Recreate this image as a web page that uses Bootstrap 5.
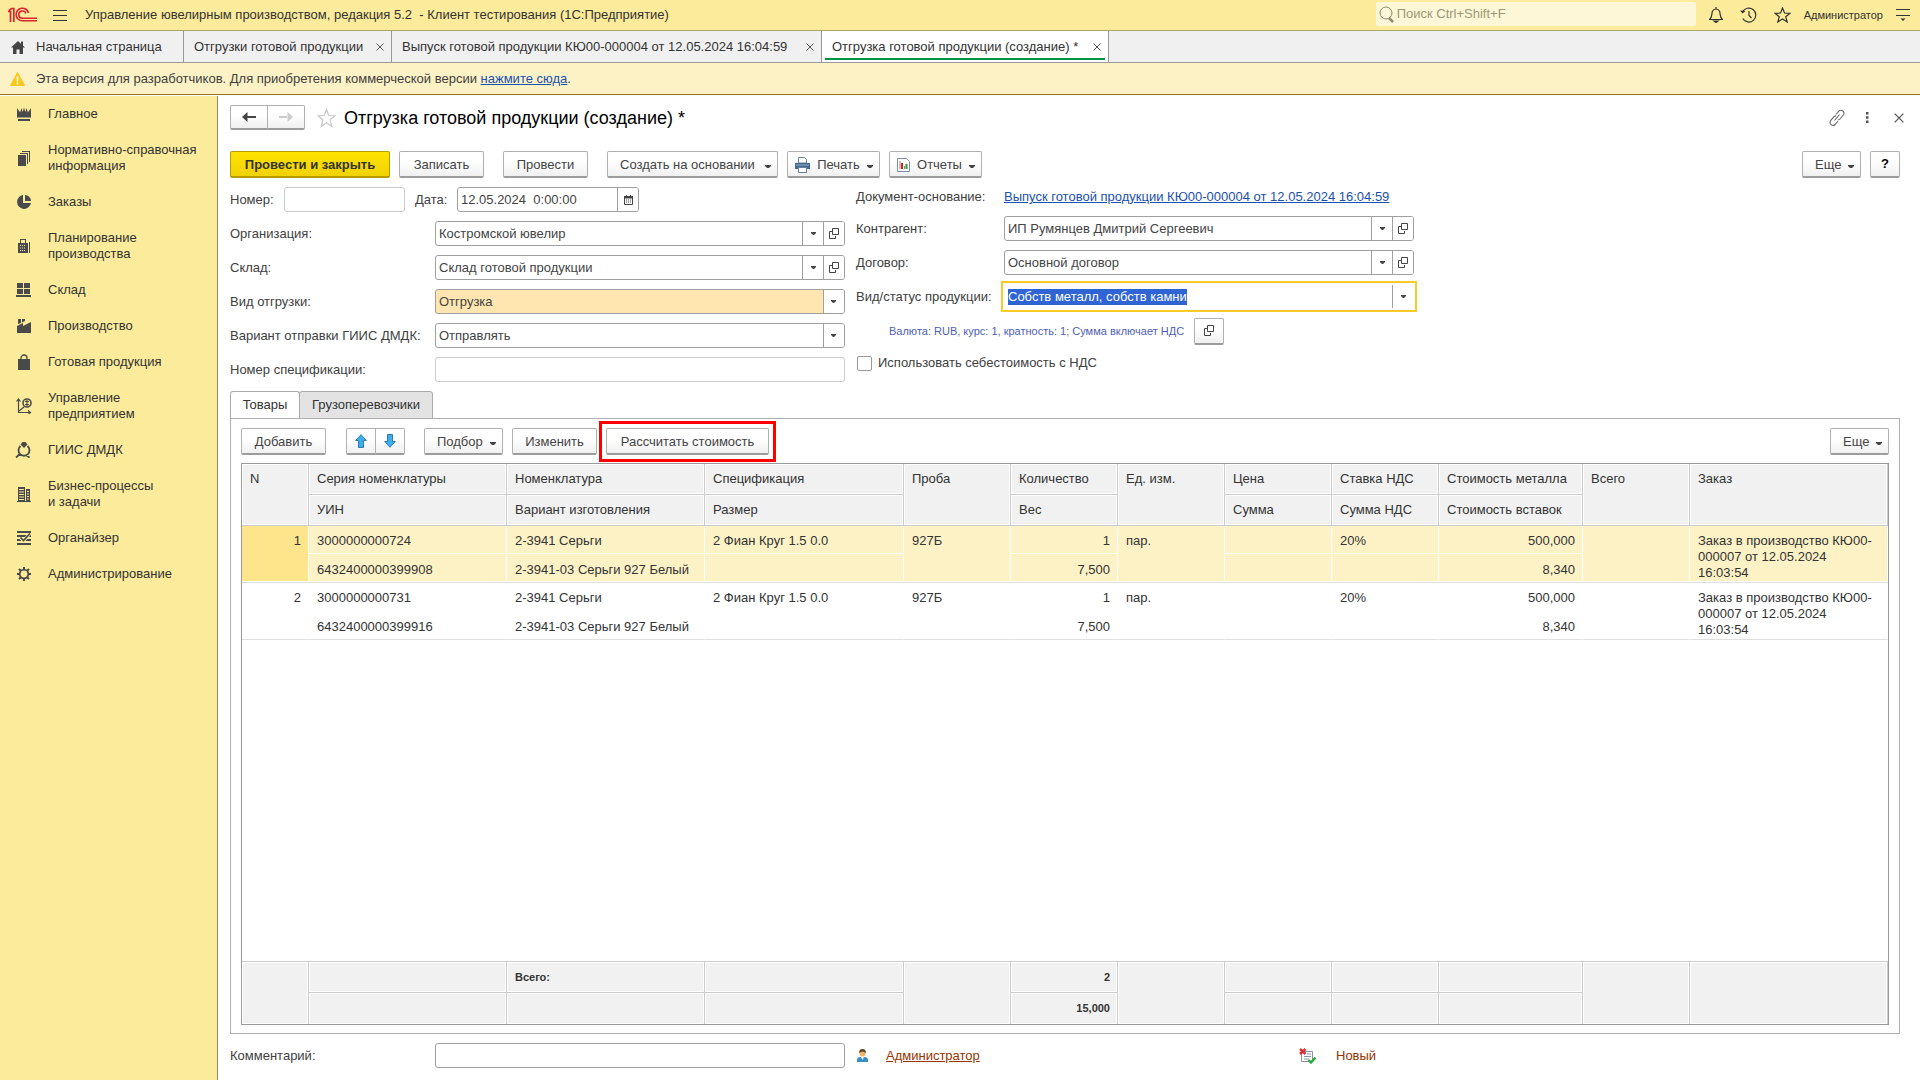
<!DOCTYPE html>
<html lang="ru">
<head>
<meta charset="utf-8">
<meta name="viewport" content="width=device-width, initial-scale=1">
<title>Отгрузка готовой продукции (создание)</title>
<link href="https://cdn.jsdelivr.net/npm/bootstrap@5.3.0/dist/css/bootstrap.min.css" rel="stylesheet">
<style>
  body { font: 13px/16px "Liberation Sans", Arial, sans-serif; color: #404040; background: #fff; }
  svg { flex: none; display: block; }
  input, select, button { font: inherit; color: inherit; }
  .app-link { color: #1a50b0; text-decoration: underline; }
  .maroon { color: #993300; }

  .app-top { height: 31px; background: #fbeb9b; border-bottom: 1px solid #aba56c; color: #333; padding: 0 10px 0 8px; }
  .app-title { margin-left: 18px; white-space: pre; }
  .app-search { width: 320px; height: 24px; background: #fdf7d7; border-radius: 2px; padding: 0 3px; gap: 3px; margin-bottom: 2px; }
  .app-search input { border: 0; background: none; padding: 0; min-width: 0; outline: 0; }
  .app-search input::placeholder { color: #9c9777; opacity: 1; }
  .icon-btn { border: 0; background: none; padding: 0; color: #333; display: flex; }
  .top-icons { gap: 17px; margin: 0 13px; }
  .user-name { font-size: 11px; margin-right: 13px; }

  .win-tabs { height: 32px; background: #f0f0f0; border-bottom: 1px solid #999; color: #333; }
  .win-tab { padding: 0 7px 0 10px; border-right: 1px solid #999; white-space: nowrap; display: flex; align-items: center; justify-content: space-between; }
  .win-tab a { color: inherit; text-decoration: none; }
  .win-tab.home { min-width: 184px; justify-content: flex-start; gap: 10px; }
  .win-tab.list { min-width: 208px; }
  .win-tab.source { min-width: 430px; }
  .win-tab.current { min-width: 287px; background: #fff; position: relative; }
  .win-tab.current::after { content: ""; position: absolute; left: 3px; right: 3px; bottom: 2px; height: 2px; background: #009646; }

  .dev-note { height: 32px; background: #fdf2c6; border-bottom: 1px solid #8f761b; padding-left: 10px; gap: 11px; }

  .side { width: 218px; flex: none; background: #fbeb9b; border-right: 1px solid #8e8a66; margin-top: 1px; color: #333; }
  .side a { color: inherit; text-decoration: none; padding: 10px 0 10px 15px; gap: 15px; }
  .side svg { color: #4a4a4a; }

  .main { padding: 10px 20px 12px 12px; min-width: 0; }
  .page-title { font-size: 18px; line-height: 24px; color: #000; margin: 0; font-weight: 400; }
  .title-tools { gap: 21px; padding-right: 1px; margin-right: -5px; }
  .commands { margin-top: 21px; gap: 9px; }
  .cmd { height: 27px; border: 1px solid #b0b0b0; border-bottom: 2px solid #9c9c9c; border-radius: 2px; background: linear-gradient(#fff 40%, #f0f0f0); color: #444; padding: 1px 11px 0; display: flex; align-items: center; justify-content: center; white-space: nowrap; }
  .cmd-main { background: linear-gradient(#ffe300, #f2d200); border-color: #b39b00; color: #333; font-weight: 700; padding: 1px 4px 0; }
  .cmd-more { padding: 1px 6px 0 12px; justify-content: space-between; }
  .cmd-icon { padding-left: 7px; }
  .cmd-square { width: 30px; padding: 0; }
  .cmd-pair { height: 25px; }
  .cmd-pair .cmd { height: 100%; }
  .cmd-pair .cmd-square { height: 27px; }
  .cmd-pair .cmd:first-child { border-radius: 2px 0 0 2px; }
  .cmd-pair .cmd:last-child { border-radius: 0 2px 2px 0; margin-left: -1px; }
  .nav-arrow { width: 38px; padding: 0; }
  .w-60px { width: 59px } .w-80px { width: 79px } .w-85px { width: 85px } .w-93px { width: 93px } .w-160px { width: 160px } .w-170px { width: 171px } .w-163px { width: 163px }
  .gap-before { margin-left: 10px; }
  .gap-around { margin: 0 10px 0 11px; }

  .form-area { margin-top: 9px; gap: 11px; }
  .form-col { gap: 9px; }
  .form-line { height: 20px; }
  .field { height: 25px; display: flex; align-items: center; }
  .field > label { flex: none; }
  .left-col { width: 615px; }
  .left-col .cap { width: 205px; }
  .left-col .cap-num { width: 54px; }
  .left-col .cap-date { width: 42px; margin-left: 10px; }
  .right-col { width: 558px; }
  .right-col .cap { width: 148px; white-space: nowrap; }
  .box { height: 25px; border: 1px solid #a0a0a0; border-radius: 3px; background: #fff; display: flex; flex: 1; min-width: 0; overflow: hidden; }
  .box.num-box { flex: 0 0 121px; }
  .box.date-box { flex: 0 0 182px; }
  .box input, .box select { flex: 1; min-width: 0; width: 100%; border: 0; padding: 0 3px; outline: 0; background: transparent; appearance: none; color: #444; }
  .box button { width: 21px; border: 0; border-left: 1px solid #a0a0a0; background: #fff; padding: 0; display: flex; align-items: center; justify-content: center; flex: none; }
  .box.pale { border-color: #ccc; }
  .box select { background: url("data:image/svg+xml,%3Csvg xmlns='http://www.w3.org/2000/svg' width='21' height='23'%3E%3Cpath d='M0 0h21v23H0z' fill='%23fff'/%3E%3Cpath d='M.5 0v23' stroke='%23a0a0a0'/%3E%3Cpath d='M8 10h5v1l-2 2h-1l-2-2z' fill='%23444'/%3E%3C/svg%3E") right center no-repeat; }
  .box.filled { background: #ffe6b0; }
  .box.active { border-color: #fff; border-radius: 0; box-shadow: 0 0 0 1px #fff, 0 0 0 3px #fbcb25; overflow: visible; }
  .box input::selection { background: #2f64d4; color: #fff; }
  .currency-line { height: 26px; padding-left: 33px; gap: 10px; }
  .currency { font-size: 11px; min-width: 290px; color: #4e60b8; text-decoration: none; white-space: nowrap; }
  .tick { width: 15px; height: 15px; margin: 0 6px 0 1px; appearance: none; border: 1px solid #999; border-radius: 2px; }

  .page-tabs { margin-top: 9px; }
  .page-tab { height: 28px; border: 1px solid #aaa; border-radius: 3px 3px 0 0; margin-bottom: -1px; padding: 0 11px; background: #e3e3e3; color: #333; min-width: 134px; }
  .page-tab + .page-tab { margin-left: -1px; }
  .page-tab.current { min-width: 70px; background: #fff; border-bottom-color: #fff; }
  .sheet { border: 1px solid #b0b0b0; padding: 9px 10px 8px; }
  .marked { outline: 3px solid #f00; outline-offset: 4px; }

  .grid-box { border: 1px solid #999; margin-top: 8px; overflow: hidden; }
  .goods { width: 100%; table-layout: fixed; color: #333; border-collapse: separate; border-spacing: 0; }
  .goods th, .goods td { vertical-align: top; padding: 7px 8px 0; }
  .goods th { font-weight: 400; }
  .goods .head th, .goods .sum td { height: 31px; background: #f1f1f1; border-right: 1px solid #ccc; border-bottom: 1px solid #ccc; box-shadow: inset 0 0 0 1px #fff; }
  .goods .rows td { height: 28px; border-right: 1px solid transparent; }
  .goods .rows tr:nth-child(even) td { height: 29px; padding-top: 8px; }
  .goods .rows tr:nth-child(even) td, .goods .rows td[rowspan] { border-bottom: 1px solid #e0e0e0; }
  .goods .rows .picked td { background: #fdf2c6; border-right-color: #fff; box-shadow: inset 0 -1px #fff; }
  .goods .rows .picked .num { background: #fee48b; }
  .goods .num, .goods .rt { text-align: right; }
  .goods .num, .goods .rt { padding-right: 7px; }
  .goods .sum td { font-size: 11px; font-weight: 700; }
  .goods .sum tr:last-child td, .goods .sum td[rowspan] { border-bottom: 0; }
  .sum-table { border-top: 1px solid #ccc; }
  .c1 { width: 67px } .c2 { width: 198px } .c2w { width: 199px } .c3 { width: 107px } .c4 { width: 144px }
  .foot { margin-top: 9px; }
  .foot .person { margin: 0 18px 0 12px; }
  .foot .author { width: 413px; }
  .foot .state { margin-left: 20px; }
</style>
</head>
<body>
<svg width="0" height="0" class="position-absolute" aria-hidden="true">
  <symbol id="caret" viewBox="0 0 6 4"><path d="M0 0h6v1L4 3H2L0 1z" fill="#444"/></symbol>
  <symbol id="drop" viewBox="0 0 5 3"><path d="M0 0h5v1L3 3H2L0 1z" fill="#444"/></symbol>
  <symbol id="open" viewBox="0 0 10 11"><path d="M3.500 .5h6v6h-6zM3 3.500H.5v7h6V8" fill="none" stroke="#444"/></symbol>
  <symbol id="cross" viewBox="0 0 8 8"><path d="M.5.5l7 7M7.500.5l-7 7" stroke="#555" fill="none"/></symbol>
</svg>
<div class="d-flex flex-column min-vh-100">

  <header class="app-top d-flex align-items-center">
    <svg width="29" height="16" viewBox="0 0 29 16" fill="none" stroke="#d9232e"><path d="M0 4.500h2.500V15M1 3.500L3.500 1.500h2.300V15" stroke-width="1.700"/><path d="M20.500 6a6.300 6.300 0 1 0-6.300 7.800H29" stroke-width="1.600"/><path d="M17.800 6.500a3.600 3.600 0 1 0-3.600 4.700H29" stroke-width="1.500"/></svg>
    <button class="icon-btn ms-3" aria-label="Меню"><svg width="14" height="12" stroke="#333"><path d="M0 1.500h14M0 6.500h14M0 11.500h14"/></svg></button>
    <div class="app-title">Управление ювелирным производством, редакция 5.2  - Клиент тестирования (1С:Предприятие)</div>
    <div class="ms-auto d-flex align-items-center">
      <label class="app-search d-flex align-items-center"><svg width="15" height="17" viewBox="0 0 15 17" fill="none" stroke="#8f8b70"><circle cx="7" cy="7" r="6"/><path d="M10 12l4 4" stroke-width="2.500"/></svg><input type="search" placeholder="Поиск Ctrl+Shift+F" aria-label="Поиск"></label>
      <div class="top-icons d-flex align-items-center">
        <button class="icon-btn" aria-label="Уведомления"><svg width="14" height="16" viewBox="0 0 14 16" fill="none" stroke="#333" stroke-width="1.200"><path d="M.5 12.500c3-2.500 2-5 2.800-8Q4.500 2 7 2t3.700 2.500c.8 3-.2 5.500 2.800 8zM7 0v2"/><path d="M5 14h4l-2 1.500z" fill="#333"/></svg></button>
        <button class="icon-btn" aria-label="История"><svg width="17" height="16" viewBox="0 0 17 16" fill="none" stroke="#333" stroke-width="1.200"><path d="M2.500 5a7 7 0 1 1 .2 6.500M9 4v4.500l2.500 2.500"/><path d="M0 3.500l2.500 3L5.500 4z" fill="#333" stroke="none"/></svg></button>
        <button class="icon-btn" aria-label="Избранное"><svg width="17" height="16" viewBox="0 0 17 16" fill="none" stroke="#333" stroke-width="1.200"><path d="M8.500 1l2 5 5.500.3-4.300 3.400L13.200 15l-4.700-3-4.700 3 1.500-5.300L1 6.300 6.500 6z"/></svg></button>
      </div>
      <span class="user-name">Администратор</span>
      <button class="icon-btn" aria-label="Сервис"><svg width="14" height="14" stroke="#333"><path d="M0 1.500h14M0 7.500h14"/><path d="M4.500 10.500h5L7 13z" fill="#333" stroke="none"/></svg></button>
    </div>
  </header>

  <nav class="win-tabs d-flex">
    <div class="win-tab home"><svg width="16" height="14" viewBox="0 0 16 14" fill="#444"><path d="M8 1l7 6.500h-2V14h-3.500V9.500h-3V14H3V7.500H1zM11 1.500h2V6l-2-2z"/></svg><a href="#">Начальная страница</a></div>
    <div class="win-tab list"><a href="#">Отгрузки готовой продукции</a><button class="icon-btn" aria-label="Закрыть"><svg width="8" height="8"><use href="#cross"/></svg></button></div>
    <div class="win-tab source"><a href="#">Выпуск готовой продукции КЮ00-000004 от 12.05.2024 16:04:59</a><button class="icon-btn" aria-label="Закрыть"><svg width="8" height="8"><use href="#cross"/></svg></button></div>
    <div class="win-tab current"><a href="#">Отгрузка готовой продукции (создание) *</a><button class="icon-btn" aria-label="Закрыть"><svg width="8" height="8"><use href="#cross"/></svg></button></div>
  </nav>

  <div class="dev-note d-flex align-items-center">
    <svg width="15" height="14" viewBox="0 0 15 14"><path d="M7.500 .5L14.500 13.500H.5z" fill="#fbc915" stroke="#fbc915" stroke-linejoin="round"/><path d="M7.500 4.500v5M7.500 10.500v2" stroke="#fff" stroke-width="1.600"/></svg>
    <div>Эта версия для разработчиков. Для приобретения коммерческой версии <a class="app-link" href="#">нажмите сюда</a>.</div>
  </div>

  <div class="d-flex flex-grow-1">
    <nav class="side d-flex flex-column">
      <a href="#" class="d-flex align-items-center"><svg width="18" height="16" viewBox="0 0 18 16" fill="currentColor"><path d="M2 2l3.200 4.500L6.200 2l1.500 4L9 1.500 10.300 6l1.500-4 1 4.500L16 2v9.500H2zM3 13h12v2H3z"/></svg>Главное</a>
      <a href="#" class="d-flex align-items-center"><svg width="18" height="16" viewBox="0 0 18 16" fill="currentColor"><path d="M3 5h8v11H3zM5 3h8v11h-1V4H5zM7 1h8v11h-1V2H7z"/></svg><span>Нормативно-справочная<br>информация</span></a>
      <a href="#" class="d-flex align-items-center"><svg width="18" height="16" viewBox="0 0 18 16" fill="currentColor"><path d="M8 1a7 7 0 1 0 8 8H8zM10 1v6h6a6 6 0 0 0-6-6z"/></svg>Заказы</a>
      <a href="#" class="d-flex align-items-center"><svg width="18" height="16" viewBox="0 0 18 16" fill="currentColor"><path fill-rule="evenodd" d="M5 1h6v4h2v10H3V5h2zM6 2v3h4V2zM5 7v1h1V7zm2 0v1h1V7zm2 0v1h1V7zM5 9.500v1h1v-1zm2 0v1h1v-1zm2 0v1h1v-1zM5 12v1h1v-1zm2 0v1h1v-1zm2 0v1h1v-1zM14 4h1v11h-1z"/></svg><span>Планирование<br>производства</span></a>
      <a href="#" class="d-flex align-items-center"><svg width="18" height="16" viewBox="0 0 18 16" fill="currentColor"><path d="M2 1h6v5H2zM9 1h6v5H9zM2 7h6v5H2zM9 7h6v5H9zM1 13h15v2H1z"/></svg>Склад</a>
      <a href="#" class="d-flex align-items-center"><svg width="18" height="16" viewBox="0 0 18 16" fill="currentColor"><path d="M3 1h3v4l-3 1zM7 1h3v2L7 4.500zM2 8l6-3v3l8-4v11H2z"/></svg>Производство</a>
      <a href="#" class="d-flex align-items-center"><svg width="18" height="16" viewBox="0 0 18 16"><path d="M3 5h12v11H3z" fill="currentColor"/><path d="M6 8V4a3 3 0 0 1 6 0v4" fill="none" stroke="currentColor" stroke-width="1.300"/></svg>Готовая продукция</a>
      <a href="#" class="d-flex align-items-center"><svg width="18" height="16" viewBox="0 0 18 16" fill="none" stroke="currentColor" stroke-width="1.200"><path d="M3.500 1v13.500H15M1.500 3.500l2-2.500 2 2.500M13 12.500l2.500 2-2.500 2M4 13l5-4"/><circle cx="12" cy="5" r="4" stroke-width="1.600"/><path d="M10 3.500h4M10 6.500h4M12 2v6"/></svg><span>Управление<br>предприятием</span></a>
      <a href="#" class="d-flex align-items-center"><svg width="18" height="16" viewBox="0 0 18 16" fill="none" stroke="currentColor" stroke-width="1.800"><path d="M5.500 4a5.500 5.500 0 1 0 7 0M5 12l-4 3.500M11.500 13.500l3 2"/><path d="M5.500 2.500L7.500 0h3l2 2.500L9 6z" fill="currentColor" stroke="none"/></svg>ГИИС ДМДК</a>
      <a href="#" class="d-flex align-items-center"><svg width="18" height="16" viewBox="0 0 18 16" fill="currentColor"><path fill-rule="evenodd" d="M3 1h7v14H3zM4 3v1h5V3zm0 2.500v1h5v-1zM4 8v1h5V8zm0 2.500v1h5v-1zM4 13v1h5v-1zM11 3h4v12h-4zM12 5v1h2V5zm0 2.500v1h2v-1zm0 2.500v1h2v-1zm0 2.500v1h2v-1zM2 15h14v1H2z"/></svg><span>Бизнес-процессы<br>и задачи</span></a>
      <a href="#" class="d-flex align-items-center"><svg width="18" height="16" viewBox="0 0 18 16" fill="none" stroke="currentColor" stroke-width="2"><path d="M2 2h14M2 6h14M2 10h14M2 14h14"/><path d="M14.500 4l-6 7-3-3" stroke="#fbeb9b" stroke-width="3"/><path d="M15 3.500l-6.500 7-3-3" stroke-width="1.600"/></svg>Органайзер</a>
      <a href="#" class="d-flex align-items-center"><svg width="18" height="16" viewBox="0 0 18 16" fill="none" stroke="currentColor"><circle cx="9" cy="8" r="4.300" stroke-width="1.800"/><path d="M9 1v2.500M9 12.500V15M2 8h2.500M13.500 8H16M4 3l1.800 1.800M12.200 11.200L14 13M4 13l1.800-1.800M12.200 4.800L14 3" stroke-width="2"/></svg>Администрирование</a>
    </nav>

    <main class="main flex-grow-1 d-flex flex-column">
      <div class="d-flex align-items-center">
        <div class="cmd-pair d-flex">
          <button class="cmd nav-arrow" aria-label="Назад"><svg width="14" height="10" viewBox="0 0 14 10" fill="#444"><path d="M5.500 0v10L0 5zM5 4h9v2H5z"/></svg></button>
          <button class="cmd nav-arrow" aria-label="Вперед"><svg width="14" height="10" viewBox="0 0 14 10" fill="#ccc"><path d="M8.500 0v10L14 5zM0 4h9v2H0z"/></svg></button>
        </div>
        <button class="icon-btn mx-2 ps-1" aria-label="В избранное"><svg width="19" height="20" viewBox="0 0 19 20" fill="none" stroke="#c8c8c8" stroke-width="1.200"><path d="M9.500 1.500l2.300 6 6.200.3-4.900 4 1.700 6.500-5.300-3.500-5.300 3.500 1.700-6.500-4.900-4 6.200-.3z"/></svg></button>
        <h1 class="page-title">Отгрузка готовой продукции (создание) *</h1>
        <div class="title-tools ms-auto d-flex align-items-center">
          <button class="icon-btn" aria-label="Ссылка"><svg width="16" height="18" viewBox="0 0 16 18" fill="none" stroke="#666" stroke-width="1.100"><path d="M5.500 11.500l5-6M7 5.500l2.800-3.300a3 3 0 0 1 4.600 3.800l-3.400 4a2.500 2.500 0 0 1-2 .8M9 12l-2.800 3.500a3 3 0 0 1-4.600-3.800l3.400-4a2.500 2.500 0 0 1 2-.8"/></svg></button>
          <button class="icon-btn" aria-label="Действия"><svg width="3" height="11" fill="#555"><path d="M0 0h2.500v2.500H0zM0 4.200h2.500v2.500H0zM0 8.500h2.500V11H0z"/></svg></button>
          <button class="icon-btn ps-1" aria-label="Закрыть"><svg width="10" height="10" viewBox="0 0 8 8"><use href="#cross"/></svg></button>
        </div>
      </div>

      <div class="commands d-flex">
        <button class="cmd cmd-main w-160px">Провести и закрыть</button>
        <button class="cmd w-85px">Записать</button>
        <button class="cmd w-85px gap-before">Провести</button>
        <button class="cmd cmd-more w-170px gap-before">Создать на основании <svg width="6" height="4" class="mt-1"><use href="#caret"/></svg></button>
        <button class="cmd cmd-more cmd-icon w-93px"><svg width="15" height="16" viewBox="0 0 15 16"><path d="M3.500.5h6l2 2V6h-8z" fill="#fff" stroke="#6a8299"/><path d="M0 6h15v6H0z" fill="#456b8c"/><path d="M1 8h13" stroke="#8fb0cc"/><path d="M3.500 10.500h8v5h-8z" fill="#fff" stroke="#6a8299"/></svg>Печать <svg width="6" height="4" class="mt-1"><use href="#caret"/></svg></button>
        <button class="cmd cmd-more cmd-icon w-93px"><svg width="13" height="14" viewBox="0 0 13 14"><path d="M.5.5h9l3 3v10H.5z" fill="#fff" stroke="#7d8fa0"/><path d="M3 3v8" stroke="#888"/><path d="M5 5v6" stroke="#e02020" stroke-width="2"/><path d="M7.500 8v3" stroke="#888"/><path d="M9.500 6v5" stroke="#20a030" stroke-width="2"/></svg>Отчеты <svg width="6" height="4" class="mt-1"><use href="#caret"/></svg></button>
        <button class="cmd cmd-more ms-auto w-60px">Еще <svg width="6" height="4" class="mt-1"><use href="#caret"/></svg></button>
        <button class="cmd cmd-square text-black fw-bold">?</button>
      </div>

      <div class="form-area d-flex">
        <div class="left-col form-col d-flex flex-column">
          <div class="field">
            <label class="cap-num" for="f-num">Номер:</label>
            <div class="box pale num-box"><input id="f-num"></div>
            <label class="cap-date" for="f-date">Дата:</label>
            <div class="box date-box"><input id="f-date" value="12.05.2024  0:00:00"><button aria-label="Календарь"><svg width="9" height="10" viewBox="0 0 9 10"><path d="M.5 1.500h8v8h-8z" fill="#fff" stroke="#444"/><path d="M0 1h9v2.500H0zM2 0h1v1H2zM6 0h1v1H6z" fill="#444"/><path d="M2 5h5.500M2 7h5.500" stroke="#444" stroke-dasharray="1 1"/></svg></button></div>
          </div>
          <div class="field"><label class="cap" for="f-org">Организация:</label><div class="box"><input id="f-org" value="Костромской ювелир"><button aria-label="Выбрать"><svg width="5" height="3"><use href="#drop"/></svg></button><button aria-label="Открыть"><svg width="10" height="11"><use href="#open"/></svg></button></div></div>
          <div class="field"><label class="cap" for="f-store">Склад:</label><div class="box"><input id="f-store" value="Склад готовой продукции"><button aria-label="Выбрать"><svg width="5" height="3"><use href="#drop"/></svg></button><button aria-label="Открыть"><svg width="10" height="11"><use href="#open"/></svg></button></div></div>
          <div class="field"><label class="cap" for="f-kind">Вид отгрузки:</label><div class="box filled"><select id="f-kind"><option>Отгрузка</option></select></div></div>
          <div class="field"><label class="cap" for="f-send">Вариант отправки ГИИС ДМДК:</label><div class="box"><select id="f-send"><option>Отправлять</option></select></div></div>
          <div class="field"><label class="cap" for="f-spec">Номер спецификации:</label><div class="box pale"><input id="f-spec"></div></div>
        </div>
        <div class="right-col form-col d-flex flex-column">
          <div class="form-line d-flex align-items-center"><span class="cap">Документ-основание:</span><a class="app-link text-nowrap" href="#">Выпуск готовой продукции КЮ00-000004 от 12.05.2024 16:04:59</a></div>
          <div class="field"><label class="cap" for="f-partner">Контрагент:</label><div class="box"><input id="f-partner" value="ИП Румянцев Дмитрий Сергеевич"><button aria-label="Выбрать"><svg width="5" height="3"><use href="#drop"/></svg></button><button aria-label="Открыть"><svg width="10" height="11"><use href="#open"/></svg></button></div></div>
          <div class="field"><label class="cap" for="f-deal">Договор:</label><div class="box"><input id="f-deal" value="Основной договор"><button aria-label="Выбрать"><svg width="5" height="3"><use href="#drop"/></svg></button><button aria-label="Открыть"><svg width="10" height="11"><use href="#open"/></svg></button></div></div>
          <div class="field"><label class="cap" for="f-status">Вид/статус продукции:</label><div class="box active"><input id="f-status" value="Собств металл, собств камни"><button aria-label="Выбрать"><svg width="5" height="3"><use href="#drop"/></svg></button></div></div>
          <div class="currency-line d-flex align-items-center"><a class="currency" href="#">Валюта: RUB, курс: 1, кратность: 1; Сумма включает НДС</a><button class="cmd cmd-square" aria-label="Открыть"><svg width="10" height="11"><use href="#open"/></svg></button></div>
          <div class="form-line d-flex align-items-center"><input class="tick" type="checkbox" id="f-cost"><label for="f-cost">Использовать себестоимость с НДС</label></div>
        </div>
      </div>

      <div class="page-tabs d-flex"><button class="page-tab current">Товары</button><button class="page-tab">Грузоперевозчики</button></div>
      <section class="sheet flex-grow-1 d-flex flex-column">
        <div class="d-flex" style="gap:9px">
          <button class="cmd w-85px">Добавить</button>
          <div class="cmd-pair d-flex gap-around">
            <button class="cmd cmd-square" aria-label="Вверх"><svg width="12" height="14" viewBox="0 0 12 14"><path d="M6 .7L11.300 6.500H8.500v7h-5v-7H.7z" fill="#3eaeea" stroke="#2a7db0"/></svg></button>
            <button class="cmd cmd-square" aria-label="Вниз"><svg width="12" height="14" viewBox="0 0 12 14"><path d="M6 13.300L11.300 7.500H8.500v-7h-5v7H.7z" fill="#3eaeea" stroke="#2a7db0"/></svg></button>
          </div>
          <button class="cmd cmd-more w-80px">Подбор <svg width="6" height="4" class="mt-1"><use href="#caret"/></svg></button>
          <button class="cmd w-85px">Изменить</button>
          <div class="marked"><button class="cmd w-163px">Рассчитать стоимость</button></div>
          <button class="cmd cmd-more ms-auto w-60px">Еще <svg width="6" height="4" class="mt-1"><use href="#caret"/></svg></button>
        </div>

        <div class="grid-box flex-grow-1 d-flex flex-column justify-content-between">
          <table class="goods">
            <colgroup><col class="c1"><col class="c2"><col class="c2"><col class="c2w"><col class="c3"><col class="c3"><col class="c3"><col class="c3"><col class="c3"><col class="c4"><col class="c3"><col></colgroup>
            <thead class="head">
              <tr><th rowspan="2">N</th><th>Серия номенклатуры</th><th>Номенклатура</th><th>Спецификация</th><th rowspan="2">Проба</th><th>Количество</th><th rowspan="2">Ед. изм.</th><th>Цена</th><th>Ставка НДС</th><th>Стоимость металла</th><th rowspan="2">Всего</th><th rowspan="2">Заказ</th></tr>
              <tr><th>УИН</th><th>Вариант изготовления</th><th>Размер</th><th>Вес</th><th>Сумма</th><th>Сумма НДС</th><th>Стоимость вставок</th></tr>
            </thead>
            <tbody class="rows">
              <tr class="picked"><td rowspan="2" class="num">1</td><td>3000000000724</td><td>2-3941 Серьги</td><td>2 Фиан Круг 1.5 0.0</td><td rowspan="2">927Б</td><td class="rt">1</td><td rowspan="2">пар.</td><td></td><td>20%</td><td class="rt">500,000</td><td rowspan="2"></td><td rowspan="2">Заказ в производство КЮ00-000007 от 12.05.2024 16:03:54</td></tr>
              <tr class="picked"><td>6432400000399908</td><td>2-3941-03 Серьги 927 Белый</td><td></td><td class="rt">7,500</td><td></td><td></td><td class="rt">8,340</td></tr>
              <tr><td rowspan="2" class="num">2</td><td>3000000000731</td><td>2-3941 Серьги</td><td>2 Фиан Круг 1.5 0.0</td><td rowspan="2">927Б</td><td class="rt">1</td><td rowspan="2">пар.</td><td></td><td>20%</td><td class="rt">500,000</td><td rowspan="2"></td><td rowspan="2">Заказ в производство КЮ00-000007 от 12.05.2024 16:03:54</td></tr>
              <tr><td>6432400000399916</td><td>2-3941-03 Серьги 927 Белый</td><td></td><td class="rt">7,500</td><td></td><td></td><td class="rt">8,340</td></tr>
            </tbody>
          </table>
          <table class="goods sum-table">
            <colgroup><col class="c1"><col class="c2"><col class="c2"><col class="c2w"><col class="c3"><col class="c3"><col class="c3"><col class="c3"><col class="c3"><col class="c4"><col class="c3"><col></colgroup>
            <tbody class="sum">
              <tr><td rowspan="2"></td><td></td><td>Всего:</td><td></td><td rowspan="2"></td><td class="rt">2</td><td rowspan="2"></td><td></td><td></td><td></td><td rowspan="2"></td><td rowspan="2"></td></tr>
              <tr><td></td><td></td><td></td><td class="rt">15,000</td><td></td><td></td><td></td></tr>
            </tbody>
          </table>
        </div>
      </section>

      <div class="foot d-flex align-items-center">
        <div class="left-col field"><label class="cap" for="f-note">Комментарий:</label><div class="box"><input id="f-note"></div></div>
        <svg class="person" width="11" height="13" viewBox="0 0 11 13"><path d="M0 13V10q1-2 3-2h5q2 0 3 2v3z" fill="#3a90c4"/><path d="M4 8h3l-1.500 3z" fill="#fff"/><circle cx="5.500" cy="4.500" r="3" fill="#f3b266"/><path d="M2 4Q2 0 5.500 0T9 4Q7 2.500 5.500 2.500T2 4z" fill="#5b4328"/></svg>
        <a class="app-link maroon author" href="#">Администратор</a>
        <svg width="17" height="16" viewBox="0 0 17 16"><path d="M2.500 3.500h11v10h-11z" fill="#fff" stroke="#8796a8"/><path d="M8 6h4M5 8.500h7M5 11h5" stroke="#8796a8"/><path d="M1 1l5.500 5M6.500 1L1 6" stroke="#dc2f36" stroke-width="2.400"/><path d="M9.500 12l2.500 2.500 4.500-5" fill="none" stroke="#27a83a" stroke-width="2.400"/></svg>
        <span class="maroon state">Новый</span>
      </div>
    </main>
  </div>
</div>
<script src="https://cdn.jsdelivr.net/npm/bootstrap@5.3.0/dist/js/bootstrap.bundle.min.js"></script>
<script>
  const status = document.getElementById('f-status');
  status.focus();
  status.select();
</script>
</body>
</html>
